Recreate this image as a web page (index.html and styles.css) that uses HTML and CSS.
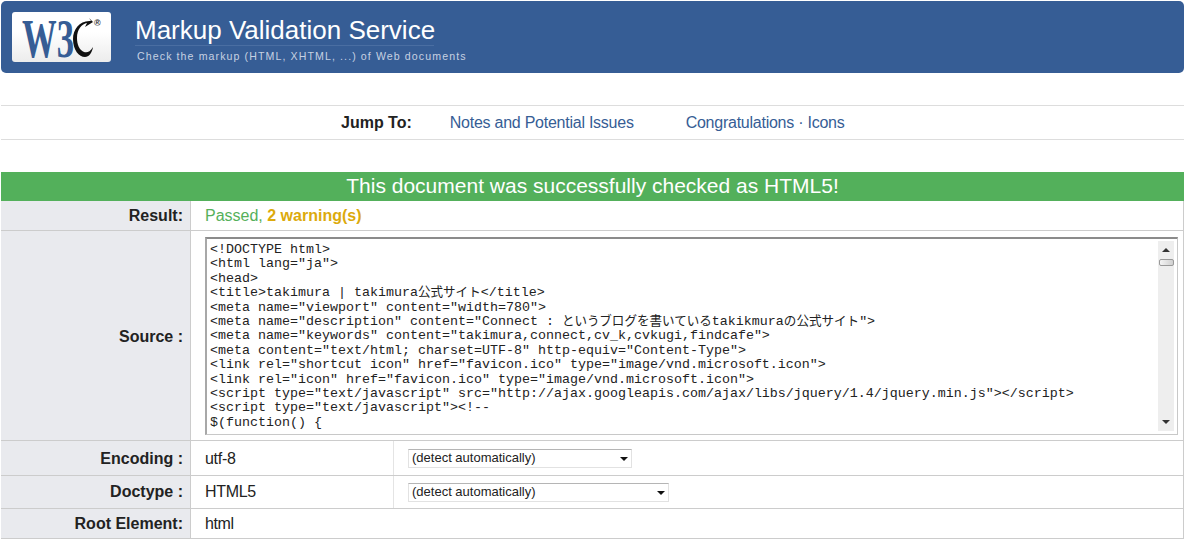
FILE: index.html
```html
<!DOCTYPE html>
<html lang="ja">
<head>
<meta charset="utf-8">
<title>Markup Validation Service</title>
<link rel="stylesheet" href="styles.css">
</head>
<body>
<header class="banner">
  <div class="logo">
    <svg class="logo-svg" width="99" height="50" viewBox="0 0 99 50">
      <text class="logo-w3" transform="translate(10 45) scale(.63 1)">W3</text>
      <path class="logo-c" d="M79 9 C68 8 61 17 61 27 C61 38 67 45 73 45 C77 45 80 41 81 35 C78 40 75 41 72 40 C67 38 65 32 65 26 C65 17 70 12 75 11 L73 15 L81 10 L77 6 Z"/>
      <text class="logo-r" x="82" y="14">®</text>
    </svg>
  </div>
  <div class="titles">
    <h1 class="title">Markup Validation Service</h1>
    <p class="subtitle">Check the markup (HTML, XHTML, ...) of Web documents</p>
  </div>
</header>
<nav class="jump">
  <strong class="jump-label">Jump To:</strong>
  <a class="jump-link jump-first" href="#notes">Notes and Potential Issues</a>
  <a class="jump-link jump-second" href="#congrats">Congratulations · Icons</a>
</nav>
<main class="report">
  <h2 class="status">This document was successfully checked as HTML5!</h2>
  <div class="row row-result">
    <div class="label">Result:</div>
    <div class="value"><span class="passed">Passed, </span><strong class="warn">2 warning(s)</strong></div>
  </div>
  <div class="row row-source">
    <div class="label">Source :</div>
    <div class="value value-source">
      <div class="source-box">
<pre class="code">&lt;!DOCTYPE html&gt;
&lt;html lang="ja"&gt;
&lt;head&gt;
&lt;title&gt;takimura | takimura<span class="ja">公式サイト</span>&lt;/title&gt;
&lt;meta name="viewport" content="width=780"&gt;
&lt;meta name="description" content="Connect : <span class="ja">というブログを書いている</span>takikmura<span class="ja">の公式サイト</span>"&gt;
&lt;meta name="keywords" content="takimura,connect,cv_k,cvkugi,findcafe"&gt;
&lt;meta content="text/html; charset=UTF-8" http-equiv="Content-Type"&gt;
&lt;link rel="shortcut icon" href="favicon.ico" type="image/vnd.microsoft.icon"&gt;
&lt;link rel="icon" href="favicon.ico" type="image/vnd.microsoft.icon"&gt;
&lt;script type="text/javascript" src="http://ajax.googleapis.com/ajax/libs/jquery/1.4/jquery.min.js"&gt;&lt;/script&gt;
&lt;script type="text/javascript"&gt;&lt;!--
$(function() {</pre>
        <div class="scrollbar">
          <span class="arrow-up"></span>
          <span class="thumb"></span>
          <span class="arrow-down"></span>
        </div>
      </div>
    </div>
  </div>
  <div class="row row-encoding">
    <div class="label">Encoding :</div>
    <div class="value value-short">utf-8</div>
    <div class="value value-select">
      <div class="select select-encoding"><span>(detect automatically)</span><i class="select-arrow"></i></div>
    </div>
  </div>
  <div class="row row-doctype">
    <div class="label">Doctype :</div>
    <div class="value value-short">HTML5</div>
    <div class="value value-select">
      <div class="select select-doctype"><span>(detect automatically)</span><i class="select-arrow"></i></div>
    </div>
  </div>
  <div class="row row-root">
    <div class="label">Root Element:</div>
    <div class="value value-tight">html</div>
  </div>
</main>
</body>
</html>
```
FILE: styles.css
```css
* { box-sizing: border-box; }
html, body { margin: 0; padding: 0; }
body {
  background: #fff;
  color: #222;
  font-family: "Liberation Sans", Arial, sans-serif;
  font-size: 16px;
  height: 541px;
  overflow: hidden;
  padding: 1px 1px 0;
}
.banner {
  display: flex;
  height: 72px;
  background: #365d95;
  border-radius: 5px;
  padding: 11px 0 0 11px;
}
.logo {
  width: 99px;
  height: 50px;
  border-radius: 3px;
  background: linear-gradient(#fff 40%, #ececec);
  flex: none;
}
.logo-svg { display: block; overflow: visible; }
.logo-w3 {
  font-family: "Liberation Serif", serif;
  font-size: 55px;
  font-weight: bold;
  fill: #365d95;
}
.logo-c { fill: #111; }
.logo-r { font-family: "Liberation Sans", sans-serif; font-size: 9px; font-weight: bold; fill: #333; }
.titles { margin-left: 24px; padding-top: 3px; }
.title {
  margin: 0;
  width: 299px;
  height: 31px;
  font-size: 26px;
  line-height: 30px;
  font-weight: normal;
  color: #fff;
  border-bottom: 1px solid #4a6ea2;
  white-space: nowrap;
}
.subtitle {
  margin: 4px 0 0 2px;
  font-size: 10.6px;
  line-height: 13px;
  letter-spacing: 1.1px;
  color: #c6d1e2;
  white-space: nowrap;
}
.jump {
  display: flex;
  align-items: center;
  height: 35px;
  margin-top: 32px;
  border-top: 1px solid #ddd;
  border-bottom: 1px solid #ddd;
  padding-left: 340px;
}
.jump-label { color: #222; }
.jump-link { color: #365d95; text-decoration: none; white-space: nowrap; letter-spacing: -0.25px; }
.jump-first { margin-left: 38px; }
.jump-second { margin-left: 52px; }
.report { margin-top: 32px; width: 1183px; }
.status {
  margin: 0;
  height: 29px;
  background: #53b05b;
  color: #fff;
  font-size: 21px;
  font-weight: normal;
  line-height: 27px;
  text-align: center;
}
.row {
  display: flex;
  border-bottom: 1px solid #ccc;
  border-right: 1px solid #ccc;
}
.row-result { height: 30px; }
.row-source { height: 210px; }
.row-encoding { height: 35px; }
.row-doctype { height: 33px; }
.row-root { height: 30px; }
.label {
  flex: none;
  width: 190px;
  padding-right: 7px;
  background: #e9eaee;
  border-right: 1px solid #ccc;
  font-weight: bold;
  text-align: right;
  display: flex;
  align-items: center;
  justify-content: flex-end;
  white-space: nowrap;
}
.row-source .label,
.row-encoding .label,
.row-encoding .value-short { padding-top: 2px; }
.value {
  display: flex;
  align-items: center;
  padding-left: 14px;
  white-space: pre;
}
.value-tight { letter-spacing: -0.4px; }
.passed { color: #55b05a; }
.warn { color: #dcaa0c; }
.value-source { flex: 1; padding: 6px 6px 5px 14px; }
.source-box {
  display: flex;
  width: 973px;
  height: 198px;
  border: 1px solid #c8c8c8;
  border-top: 2px solid #8b8b8b;
  border-left: 2px solid #a8a8a8;
  background: #fff;
  padding: 2px 3px 3px 0;
}
.code {
  flex: 1;
  margin: 0;
  padding: 2px 0 0 3px;
  overflow: hidden;
  font-family: "Liberation Mono", "Noto Sans CJK JP", monospace;
  font-size: 13.33px;
  line-height: 14.4px;
  color: #222;
}
.ja { font-size: 12.55px; display: inline-block; height: 14px; line-height: 14px; }
.scrollbar {
  position: relative;
  flex: none;
  width: 16px;
  background: #eeeeee;
  display: flex;
  flex-direction: column;
  align-items: center;
}
.arrow-up {
  margin-top: 7px;
  border-left: 4px solid transparent;
  border-right: 4px solid transparent;
  border-bottom: 4px solid #333;
}
.thumb {
  margin-top: 7px;
  width: 15px;
  height: 7px;
  border: 1px solid #999;
  border-radius: 2px;
  background: linear-gradient(90deg, #f4f4f4, #d0d0d0);
}
.arrow-down {
  margin-top: auto;
  margin-bottom: 7px;
  border-left: 4px solid transparent;
  border-right: 4px solid transparent;
  border-top: 4px solid #333;
}
.value-short { width: 203px; flex: none; border-right: 1px solid #e4e4e4; letter-spacing: -0.3px; }
.value-select { padding-left: 14px; }
.select {
  position: relative;
  height: 19px;
  padding-left: 3px;
  border: 1px solid #e2e2e2;
  border-top-color: #b5b5b5;
  background: #fff;
  font-family: "Liberation Sans", Arial, sans-serif;
  font-size: 13px;
  line-height: 16px;
  color: #222;
}
.select-encoding { width: 224px; }
.select-doctype { width: 261px; }
.select-arrow {
  position: absolute;
  right: 3px;
  top: 7px;
  border-left: 4px solid transparent;
  border-right: 4px solid transparent;
  border-top: 4px solid #111;
}
```
